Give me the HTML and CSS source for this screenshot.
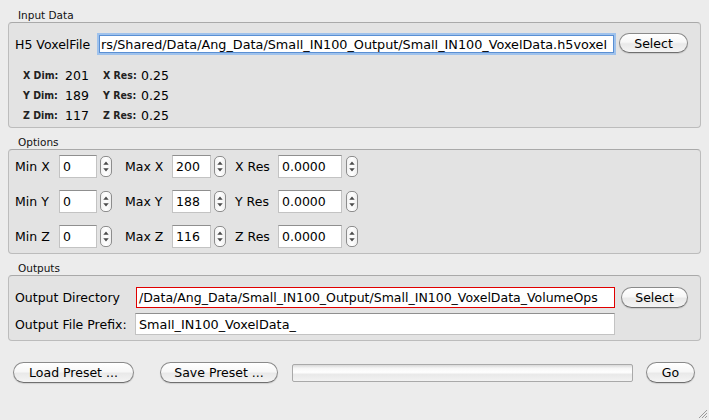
FILE: index.html
```html
<!DOCTYPE html>
<html>
<head>
<meta charset="utf-8">
<link rel="stylesheet" href="styles.css">
</head>
<body>
<div class="window">
  <div class="group-title first">Input Data</div>
  <div class="group-box input-box">
    <div class="file-row">
      <span class="lbl file-lbl">H5 VoxelFile</span>
      <div class="field focus">rs/Shared/Data/Ang_Data/Small_IN100_Output/Small_IN100_VoxelData.h5voxel</div>
      <button class="btn select-btn">Select</button>
    </div>
    <div class="dims">
      <span class="dl">X Dim:</span><span class="dv">201</span><span class="dl">X Res:</span><span class="dv">0.25</span>
      <span class="dl">Y Dim:</span><span class="dv">189</span><span class="dl">Y Res:</span><span class="dv">0.25</span>
      <span class="dl">Z Dim:</span><span class="dv">117</span><span class="dl">Z Res:</span><span class="dv">0.25</span>
    </div>
  </div>

  <div class="group-title">Options</div>
  <div class="group-box options-box">
    <div class="opt-grid">
      <span class="lbl">Min X</span>
      <div class="spin"><div class="field num w38">0</div><div class="spinner"><svg width="11" height="19" viewBox="0 0 11 19"><path d="M2.5 7.5 L5.5 4 L8.5 7.5 Z" fill="#4a4a4a"/><path d="M2.5 11.5 L5.5 15 L8.5 11.5 Z" fill="#4a4a4a"/></svg></div></div>
      <span class="lbl">Max X</span>
      <div class="spin"><div class="field num w39">200</div><div class="spinner"><svg width="11" height="19" viewBox="0 0 11 19"><path d="M2.5 7.5 L5.5 4 L8.5 7.5 Z" fill="#4a4a4a"/><path d="M2.5 11.5 L5.5 15 L8.5 11.5 Z" fill="#4a4a4a"/></svg></div></div>
      <span class="lbl">X Res</span>
      <div class="spin"><div class="field num w65">0.0000</div><div class="spinner"><svg width="11" height="19" viewBox="0 0 11 19"><path d="M2.5 7.5 L5.5 4 L8.5 7.5 Z" fill="#4a4a4a"/><path d="M2.5 11.5 L5.5 15 L8.5 11.5 Z" fill="#4a4a4a"/></svg></div></div>

      <span class="lbl">Min Y</span>
      <div class="spin"><div class="field num w38">0</div><div class="spinner"><svg width="11" height="19" viewBox="0 0 11 19"><path d="M2.5 7.5 L5.5 4 L8.5 7.5 Z" fill="#4a4a4a"/><path d="M2.5 11.5 L5.5 15 L8.5 11.5 Z" fill="#4a4a4a"/></svg></div></div>
      <span class="lbl">Max Y</span>
      <div class="spin"><div class="field num w39">188</div><div class="spinner"><svg width="11" height="19" viewBox="0 0 11 19"><path d="M2.5 7.5 L5.5 4 L8.5 7.5 Z" fill="#4a4a4a"/><path d="M2.5 11.5 L5.5 15 L8.5 11.5 Z" fill="#4a4a4a"/></svg></div></div>
      <span class="lbl">Y Res</span>
      <div class="spin"><div class="field num w65">0.0000</div><div class="spinner"><svg width="11" height="19" viewBox="0 0 11 19"><path d="M2.5 7.5 L5.5 4 L8.5 7.5 Z" fill="#4a4a4a"/><path d="M2.5 11.5 L5.5 15 L8.5 11.5 Z" fill="#4a4a4a"/></svg></div></div>

      <span class="lbl">Min Z</span>
      <div class="spin"><div class="field num w38">0</div><div class="spinner"><svg width="11" height="19" viewBox="0 0 11 19"><path d="M2.5 7.5 L5.5 4 L8.5 7.5 Z" fill="#4a4a4a"/><path d="M2.5 11.5 L5.5 15 L8.5 11.5 Z" fill="#4a4a4a"/></svg></div></div>
      <span class="lbl">Max Z</span>
      <div class="spin"><div class="field num w39">116</div><div class="spinner"><svg width="11" height="19" viewBox="0 0 11 19"><path d="M2.5 7.5 L5.5 4 L8.5 7.5 Z" fill="#4a4a4a"/><path d="M2.5 11.5 L5.5 15 L8.5 11.5 Z" fill="#4a4a4a"/></svg></div></div>
      <span class="lbl">Z Res</span>
      <div class="spin"><div class="field num w65">0.0000</div><div class="spinner"><svg width="11" height="19" viewBox="0 0 11 19"><path d="M2.5 7.5 L5.5 4 L8.5 7.5 Z" fill="#4a4a4a"/><path d="M2.5 11.5 L5.5 15 L8.5 11.5 Z" fill="#4a4a4a"/></svg></div></div>
    </div>
  </div>

  <div class="group-title">Outputs</div>
  <div class="group-box outputs-box">
    <div class="out-row">
      <span class="lbl out-lbl">Output Directory</span>
      <div class="field error">/Data/Ang_Data/Small_IN100_Output/Small_IN100_VoxelData_VolumeOps</div>
      <button class="btn select2-btn">Select</button>
    </div>
    <div class="out-row second">
      <span class="lbl out-lbl">Output File Prefix:</span>
      <div class="field prefix">Small_IN100_VoxelData_</div>
    </div>
  </div>

  <div class="bottom-row">
    <button class="btn load-btn">Load Preset ...</button>
    <button class="btn save-btn">Save Preset ...</button>
    <div class="progress"></div>
    <button class="btn go-btn">Go</button>
  </div>
</div>
<svg class="grip" width="12" height="12" viewBox="0 0 12 12"><path d="M11 3 L3 11 M11 6 L6 11 M11 9 L9 11" stroke="#9a9a9a" stroke-width="1"/></svg>
</body>
</html>
```

FILE: styles.css
```css
* { box-sizing: border-box; }
html, body {
  margin: 0;
  padding: 0;
  background: #ececec;
  width: 709px;
  height: 420px;
  overflow: hidden;
  font-family: "DejaVu Sans", "Noto Sans", sans-serif;
  font-size: 12.5px;
  color: #000;
}
.window {
  padding: 0 8px;
  display: flex;
  flex-direction: column;
}
.group-title {
  font-size: 10.5px;
  line-height: 13px;
  height: 13px;
  padding-left: 10px;
  margin-top: 8px;
  color: #111;
}
.group-title.first { margin-top: 9px; }
.group-box {
  border: 1px solid #bcbcbc;
  border-top-color: #a9a9a9;
  border-radius: 4px;
  background: #e3e3e3;
  padding-left: 6px;
}
.lbl { white-space: nowrap; }

/* Input box */
.input-box {
  height: 106px;
  padding-top: 10px;
}
.file-row {
  display: flex;
  align-items: center;
  height: 22px;
}
.file-lbl { width: 84px; }
.field {
  background: #fff;
  border: 1px solid #c3c3c3;
  border-top-color: #8f8f8f;
  white-space: nowrap;
  overflow: hidden;
  font-size: 12.8px;
  display: flex;
  align-items: center;
  padding-left: 2px;
}
.field.focus {
  width: 515px;
  height: 18px;
  border-color: #5a8fd3;
  box-shadow: 0 0 0 2px #9fc2ec;
  padding-left: 1px;
}
.btn {
  font-family: inherit;
  font-size: 12.5px;
  color: #000;
  height: 21px;
  padding: 0;
  border: 1px solid #8a8a8a;
  border-bottom-color: #6f6f6f;
  border-radius: 11px;
  background: linear-gradient(#ffffff 0%, #f7f7f7 45%, #e9e9e9 55%, #f4f4f4 100%);
  box-shadow: 0 1px 1px rgba(0,0,0,0.12);
  text-align: center;
  line-height: 19px;
}
.select-btn {
  width: 69px;
  height: 20px;
  margin-left: 5px;
  margin-top: -2px;
}
.dims {
  margin-top: 10px;
  margin-left: 8px;
  display: grid;
  grid-template-columns: 42px 38px 38px auto;
  grid-auto-rows: 20px;
  align-items: center;
}
.dl {
  font-family: "DejaVu Sans Condensed", "DejaVu Sans", sans-serif;
  font-weight: bold;
  font-size: 10.5px;
  color: #222;
}
.dv { font-size: 12.5px; }

/* Options */
.options-box {
  height: 105px;
  padding-top: 5px;
}
.opt-grid {
  display: grid;
  grid-template-columns: 44px 66px 47px 63px 43px 80px;
  grid-auto-rows: 23px;
  row-gap: 12px;
  align-items: center;
}
.spin {
  display: flex;
  align-items: center;
  gap: 3px;
}
.field.num { height: 23px; padding-left: 3px; font-size: 12.5px; }
.w38 { width: 38px; }
.w39 { width: 39px; }
.w65 { width: 65px; }
.spin .w65 + .spinner { margin-left: 1px; }
.spinner {
  width: 12px;
  height: 21px;
  border: 1px solid #8d8d8d;
  border-radius: 5px;
  background: linear-gradient(90deg, #f2f2f2, #ffffff 50%, #efefef);
  display: flex;
  align-items: center;
  justify-content: center;
}
.spinner svg { display: block; }

/* Outputs */
.outputs-box {
  height: 66px;
  padding-top: 11px;
}
.out-row {
  display: flex;
  align-items: center;
  height: 21px;
}
.out-row.second {
  margin-top: 5px;
  height: 22px;
}
.out-lbl { width: 121px; }
.field.error {
  width: 479px;
  height: 21px;
  border: 1px solid #e00000;
  padding-left: 2px;
  font-size: 12.5px;
}
.field.prefix {
  width: 480px;
  height: 22px;
  margin-left: -1px;
  padding-left: 3px;
}
.select2-btn {
  width: 67px;
  margin-left: 6px;
}

/* Bottom */
.bottom-row {
  margin-top: 21px;
  margin-left: 5px;
  display: flex;
  align-items: center;
  height: 21px;
}
.load-btn { width: 121px; }
.save-btn { width: 118px; margin-left: 26px; }
.progress {
  width: 341px;
  height: 18px;
  margin-left: 14px;
  border: 1px solid #a9a9a9;
  border-radius: 2px;
  background: linear-gradient(#d9d9d9 0%, #f6f6f6 20%, #ffffff 45%, #e9e9e9 60%, #f2f2f2 100%);
}
.go-btn { width: 49px; margin-left: 13px; }

.grip {
  position: absolute;
  right: 1px;
  bottom: 1px;
}
```
